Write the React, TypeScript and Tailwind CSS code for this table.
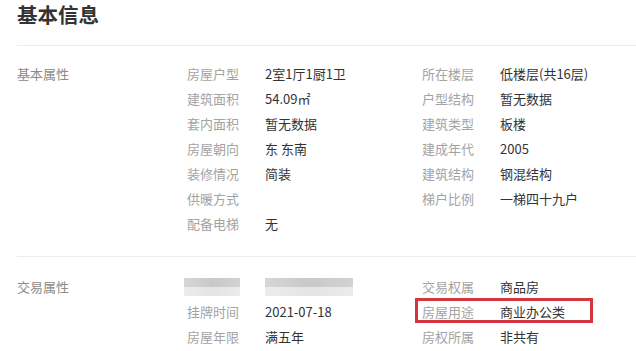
const FONT = { fontFamily: '"Noto Sans CJK SC", "Noto Sans", sans-serif' };

type Cell = { k?: string; v?: string; blur?: boolean; mark?: boolean } | null;

const BASIC: [Cell, Cell][] = [
  [{ k: "房屋户型", v: "2室1厅1厨1卫" }, { k: "所在楼层", v: "低楼层(共16层)" }],
  [{ k: "建筑面积", v: "54.09㎡" }, { k: "户型结构", v: "暂无数据" }],
  [{ k: "套内面积", v: "暂无数据" }, { k: "建筑类型", v: "板楼" }],
  [{ k: "房屋朝向", v: "东 东南" }, { k: "建成年代", v: "2005" }],
  [{ k: "装修情况", v: "简装" }, { k: "建筑结构", v: "钢混结构" }],
  [{ k: "供暖方式", v: "" }, { k: "梯户比例", v: "一梯四十九户" }],
  [{ k: "配备电梯", v: "无" }, null],
];

const TRADE: [Cell, Cell][] = [
  [{ blur: true }, { k: "交易权属", v: "商品房" }],
  [{ k: "挂牌时间", v: "2021-07-18" }, { k: "房屋用途", v: "商业办公类", mark: true }],
  [{ k: "房屋年限", v: "满五年" }, { k: "房权所属", v: "非共有" }],
];

// pixelated placeholder where the screenshot was blurred out
const Blur = ({ w }: { w: string }) => (
  <div className={`flex flex-col h-[18px] ${w}`}>
    <div className="h-1/2 bg-gradient-to-r from-[#d6d6d8] via-[#c9c7ca] to-[#d2d2d4]" />
    <div className="h-1/2 bg-gradient-to-r from-[#ececec] via-[#e4e4e6] to-[#ebebeb]" />
  </div>
);

const CellView = ({ c }: { c: Cell }) => {
  if (!c) return <div />;
  if (c.blur)
    return (
      <div className="flex items-center">
        <div className="w-[81px] -ml-[3px]"><Blur w="w-[56px]" /></div>
        <Blur w="w-[88px]" />
      </div>
    );
  return (
    <div className="relative flex items-center">
      <span className="w-[78px] text-[#a3a3a3]">{c.k}</span>
      <span className="text-[#333]">{c.v}</span>
      {c.mark && (
        <div className="absolute -left-[7px] -top-[1px] w-[178px] h-[25px] border-[3px] border-[#d3363e]" />
      )}
    </div>
  );
};

const Section = ({ title, rows, cls }: { title: string; rows: [Cell, Cell][]; cls: string }) => (
  <div className={`flex ${cls}`}>
    <div className="w-[170px] h-[25px] flex items-center text-[#8a8a8a]">{title}</div>
    <div className="flex flex-col">
      {rows.map((r, i) => (
        <div key={i} className="grid grid-cols-[235px_200px] h-[25px]">
          <CellView c={r[0]} />
          <CellView c={r[1]} />
        </div>
      ))}
    </div>
  </div>
);

export default function App() {
  return (
    <div style={FONT} className="w-[636px] h-[351px] overflow-hidden bg-white pl-[17px] text-[13px] leading-none">
      <div className="h-[46px] border-b border-[#ececec] pt-[3px]">
        <h1 className="text-[20.5px] font-bold text-[#333] leading-[22px]">基本信息</h1>
      </div>
      <Section title="基本属性" rows={BASIC} cls="pt-[15px] pb-[20px] border-b border-[#ececec]" />
      <Section title="交易属性" rows={TRADE} cls="pt-[17px]" />
    </div>
  );
}
